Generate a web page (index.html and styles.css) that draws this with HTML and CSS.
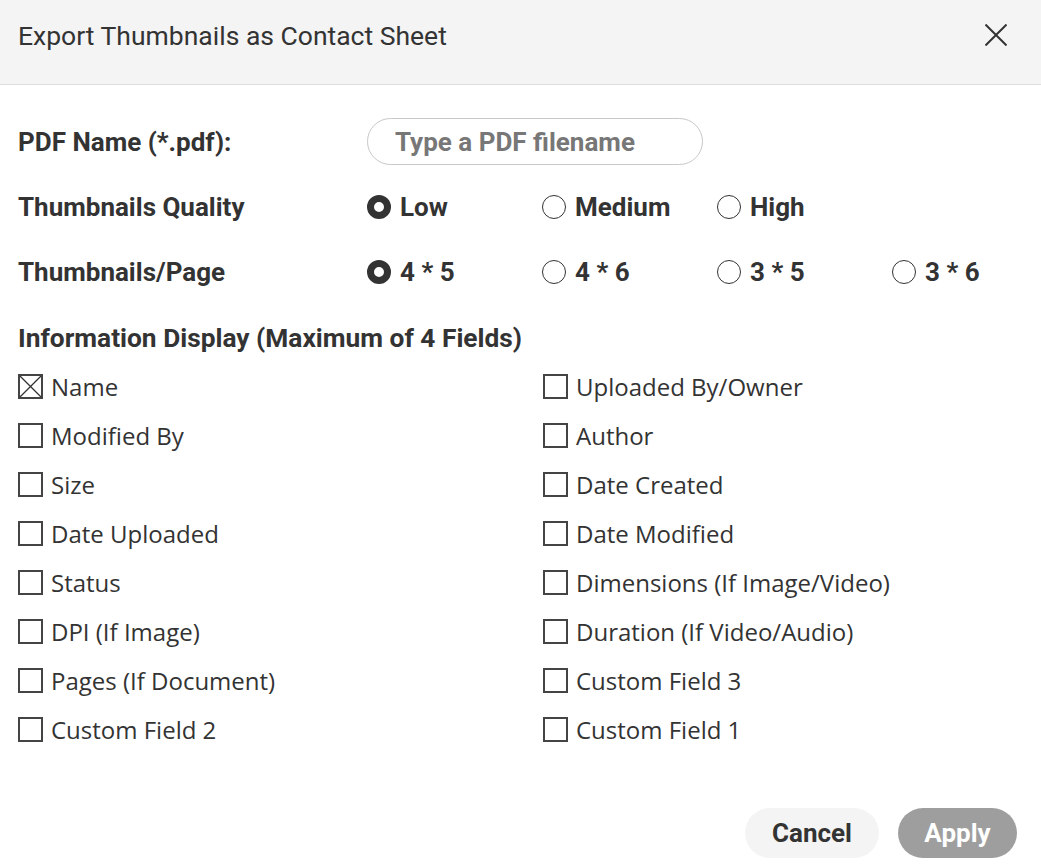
FILE: index.html
```html
<!DOCTYPE html>
<html lang="en">

<head>
    <meta charset="UTF-8">
    <meta name="viewport" content="width=device-width, initial-scale=1.0">
    <title>Export Thumbnails as Contact Sheet</title>
    <link rel="stylesheet" href="styles.css">
</head>

<body>
    <div class="dialog">
        <div class="header">
            <h1 class="title">Export Thumbnails as Contact Sheet</h1>
            <button class="btn-close" aria-label="Close">
                <svg width="22" height="22" viewBox="0 0 22 22">
                    <path d="M0.5 0.5 L21.5 21.5 M21.5 0.5 L0.5 21.5" stroke="#333" stroke-width="2" fill="none" />
                </svg>
            </button>
        </div>

        <div class="content">
            <div class="field-row">
                <label class="field-label" for="pdf_name">PDF Name (*.pdf):</label>
                <input type="text" id="pdf_name" class="pdf-input" placeholder="Type a PDF filename">
            </div>

            <div class="field-row">
                <span class="field-label">Thumbnails Quality</span>
                <div class="options">
                    <span class="radio checked"></span><span class="opt-text">Low</span>
                </div>
                <div class="options">
                    <span class="radio"></span><span class="opt-text">Medium</span>
                </div>
                <div class="options">
                    <span class="radio"></span><span class="opt-text">High</span>
                </div>
            </div>

            <div class="field-row">
                <span class="field-label">Thumbnails/Page</span>
                <div class="options">
                    <span class="radio checked"></span><span class="opt-text">4 * 5</span>
                </div>
                <div class="options">
                    <span class="radio"></span><span class="opt-text">4 * 6</span>
                </div>
                <div class="options">
                    <span class="radio"></span><span class="opt-text">3 * 5</span>
                </div>
                <div class="options">
                    <span class="radio"></span><span class="opt-text">3 * 6</span>
                </div>
            </div>

            <h2 class="section-title">Information Display (Maximum of 4 Fields)</h2>

            <div class="check-grid" id="field-list">
                <!-- fields -->
            </div>
        </div>

        <div class="footer">
            <button class="btn-cancel">Cancel</button>
            <button class="btn-apply">Apply</button>
        </div>
    </div>

    <script>
        var fields = [
            { name: "Name", checked: true },
            { name: "Uploaded By/Owner" },
            { name: "Modified By" },
            { name: "Author" },
            { name: "Size" },
            { name: "Date Created" },
            { name: "Date Uploaded" },
            { name: "Date Modified" },
            { name: "Status" },
            { name: "Dimensions (If Image/Video)" },
            { name: "DPI (If Image)" },
            { name: "Duration (If Video/Audio)" },
            { name: "Pages (If Document)" },
            { name: "Custom Field 3" },
            { name: "Custom Field 2" },
            { name: "Custom Field 1" }
        ];

        function showFields() {
            var list = document.getElementById('field-list');
            list.innerHTML = '';
            fields.forEach(function (f) {
                var item = document.createElement('div');
                item.className = 'check-item';
                var box = '<span class="checkbox"></span>';
                if (f.checked) {
                    box = '<span class="checkbox"><svg width="21" height="21" viewBox="0 0 21 21"><path d="M0 0 L21 21 M21 0 L0 21" stroke="#333" stroke-width="1.3" fill="none"/></svg></span>';
                }
                item.innerHTML = box + '<span class="check-text">' + f.name + '</span>';
                list.appendChild(item);
            });
        }

        showFields();
    </script>
</body>

</html>
```

FILE: styles.css
```css
body {
    margin: 0;
    font-family: Roboto, Arial, sans-serif;
    color: #333;
    background-color: #fff;
}

.dialog {
    width: 1041px;
    height: 867px;
    display: flex;
    flex-direction: column;
}

.header {
    height: 84px;
    background-color: #f4f4f4;
    border-bottom: 1px solid #ddd;
    display: flex;
    align-items: center;
    justify-content: space-between;
    padding: 0 34px 0 18px;
}

.title {
    margin: 0;
    font-size: 26.5px;
    font-weight: 400;
    color: #333;
    margin-top: -14px;
}

.btn-close {
    background: none;
    border: none;
    padding: 0;
    width: 22px;
    height: 22px;
    cursor: pointer;
    margin-top: -14px;
}

.content {
    padding: 33px 18px 0 18px;
    flex: 1;
}

.field-row {
    display: grid;
    grid-template-columns: 349px 175px 175px 175px 175px;
    align-items: center;
    height: 47px;
    margin-bottom: 18px;
}

.field-label {
    font-size: 26px;
    font-weight: 700;
    color: #333;
}

.pdf-input {
    grid-column: 2 / span 3;
    width: 336px;
    height: 47px;
    box-sizing: border-box;
    border: 1px solid #c8c8c8;
    border-radius: 24px;
    padding: 0 27px;
    font-family: Roboto, Arial, sans-serif;
    font-size: 26px;
    font-weight: 700;
    color: #333;
    outline: none;
}

.pdf-input::placeholder {
    color: #777;
}

.options {
    display: flex;
    align-items: center;
    gap: 9px;
}

.radio {
    width: 24px;
    height: 24px;
    box-sizing: border-box;
    border: 1.5px solid #333;
    border-radius: 50%;
    background-color: #fff;
}

.radio.checked {
    border: 7px solid #333;
}

.opt-text {
    font-size: 26px;
    font-weight: 700;
    color: #333;
}

.section-title {
    margin: 28px 0 9px 0;
    font-size: 26.3px;
    font-weight: 700;
    line-height: 30px;
    color: #333;
}

.check-grid {
    display: grid;
    grid-template-columns: 525px 480px;
}

.check-item {
    height: 49px;
    display: flex;
    align-items: center;
    gap: 8px;
}

.checkbox {
    width: 25px;
    height: 25px;
    box-sizing: border-box;
    border: 2px solid #444;
    display: flex;
    align-items: center;
    justify-content: center;
}

.check-text {
    font-family: "Open Sans", "Noto Sans", sans-serif;
    font-size: 24px;
    line-height: 30px;
    color: #333;
}

.footer {
    display: flex;
    justify-content: flex-end;
    gap: 19px;
    padding: 0 24px 9px 0;
}

button {
    font-family: Roboto, Arial, sans-serif;
}

.btn-cancel,
.btn-apply {
    height: 50px;
    border: none;
    border-radius: 25px;
    font-size: 26px;
    font-weight: 700;
    cursor: pointer;
}

.btn-cancel {
    width: 134px;
    background-color: #f4f4f4;
    color: #333;
}

.btn-apply {
    width: 119px;
    background-color: #9e9e9e;
    color: #fff;
}
```
